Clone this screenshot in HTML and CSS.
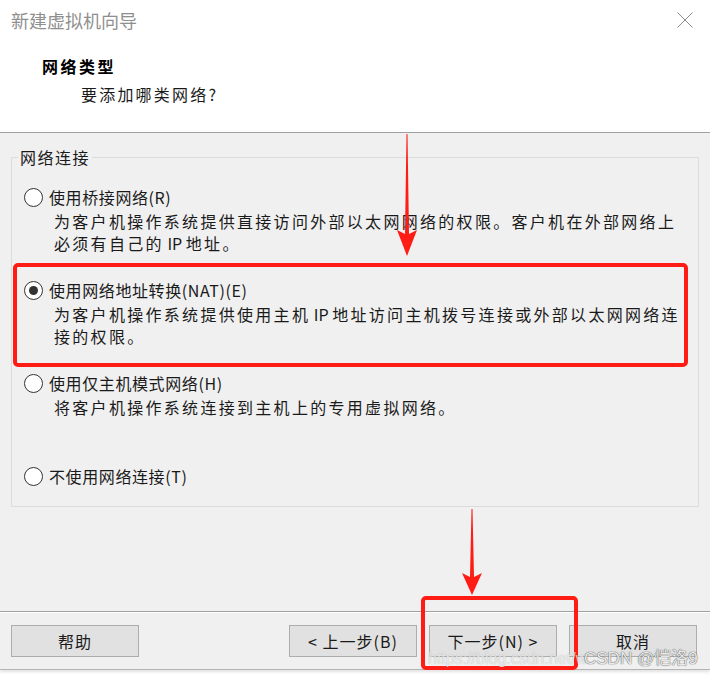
FILE: index.html
```html
<!DOCTYPE html>
<html lang="zh-CN">
<head>
<meta charset="utf-8">
<title>新建虚拟机向导</title>
<link rel="stylesheet" href="styles.css">
</head>
<body>
<div class="dialog">
  <header class="header">
    <div class="titlebar">
      <span class="title">新建虚拟机向导</span>
      <svg class="close" width="16" height="16" viewBox="0 0 16 16"><path d="M0.5 0.5 L15.5 15.5 M15.5 0.5 L0.5 15.5" stroke="#8c8c8c" stroke-width="1" fill="none"/></svg>
    </div>
    <h1 class="heading">网络类型</h1>
    <p class="subheading">要添加哪类网络?</p>
  </header>

  <fieldset class="group">
    <legend class="legend">网络连接</legend>
    <div class="option">
      <span class="radio"></span>
      <div class="label">使用桥接网络(R)</div>
      <div class="desc">为客户机操作系统提供直接访问外部以太网网络的权限。客户机在外部网络上<br>必须有自己的<span class="latin"> IP </span>地址。</div>
    </div>
    <div class="option">
      <span class="radio checked"></span>
      <div class="label">使用网络地址转换(NAT)(E)</div>
      <div class="desc">为客户机操作系统提供使用主机<span class="latin"> IP </span>地址访问主机拨号连接或外部以太网网络连<br>接的权限。</div>
    </div>
    <div class="option">
      <span class="radio"></span>
      <div class="label">使用仅主机模式网络(H)</div>
      <div class="desc">将客户机操作系统连接到主机上的专用虚拟网络。</div>
    </div>
    <div class="option last">
      <span class="radio"></span>
      <div class="label">不使用网络连接(T)</div>
    </div>
  </fieldset>

  <footer class="footer">
    <button class="btn">帮助</button>
    <div class="nav">
      <button class="btn">&lt; 上一步(B)</button>
      <button class="btn">下一步(N) &gt;</button>
      <button class="btn">取消</button>
    </div>
  </footer>
</div>

<div class="mark box1"></div>
<div class="mark box2"></div>
<svg class="mark arrow1" width="24" height="124" viewBox="0 0 24 124"><polygon points="11.5,0 12.5,0 14,100 22,96 12,122 2,96 10,100" fill="#ff1c14"/></svg>
<svg class="mark arrow2" width="24" height="88" viewBox="0 0 24 88"><polygon points="11.5,0 12.5,0 14,68 22,64 12,86 2,64 10,68" fill="#ff1c14"/></svg>
<span class="mark wm-url">https://blog.csdn.net/w</span>
<span class="mark wm-name">CSDN @恺洛9</span>
</body>
</html>
```

FILE: styles.css
```css
* { box-sizing: border-box; }

html, body {
  margin: 0;
  padding: 0;
  background: #ffffff;
}

body {
  width: 710px;
  height: 678px;
  position: relative;
  overflow: hidden;
  font-family: "Noto Sans CJK SC", "Noto Sans", sans-serif;
  color: #1a1a1a;
}

.dialog {
  height: 670px;
  background: #f0f0f0;
  display: flex;
  flex-direction: column;
  border-bottom: 1px solid #b4b4b4;
  box-shadow: 0 2px 3px rgba(0, 0, 0, 0.12);
}

.header {
  height: 133px;
  background: #ffffff;
  border-bottom: 1px solid #a0a0a0;
  padding: 0;
}

.titlebar {
  height: 42px;
  display: flex;
  align-items: center;
  justify-content: space-between;
  padding: 0 17px 2px 11px;
}

.title {
  font-size: 18px;
  color: #8f8f8f;
  letter-spacing: 0;
  line-height: 22px;
}

.close {
  display: block;
}

.heading {
  margin: 13px 0 0 42px;
  font-size: 16px;
  line-height: 22px;
  font-weight: bold;
  letter-spacing: 2.5px;
  color: #000;
}

.subheading {
  margin: 6px 0 0 81px;
  font-size: 16px;
  line-height: 22px;
  letter-spacing: 2.2px;
  color: #1a1a1a;
}

.group {
  margin: 14px 11px 0 11px;
  padding: 19px 12px 19px 12px;
  border: 1px solid #dcdcdc;
  min-width: 0;
}

.legend {
  margin-left: -6px;
  padding: 0 2px;
  font-size: 16px;
  line-height: 20px;
  letter-spacing: 1.5px;
  color: #1a1a1a;
}

.option {
  display: grid;
  grid-template-columns: 25px 1fr;
  margin-bottom: 25px;
}

.option.last {
  margin-bottom: 0;
}

.radio {
  grid-row: 1;
  grid-column: 1;
  width: 19px;
  height: 19px;
  margin-top: 2px;
  border: 1px solid #333333;
  border-radius: 50%;
  background: #ffffff;
  display: flex;
  align-items: center;
  justify-content: center;
}

.radio.checked::after {
  content: "";
  width: 9px;
  height: 9px;
  border-radius: 50%;
  background: #333333;
}

.label {
  grid-row: 1;
  grid-column: 2;
  font-size: 16px;
  line-height: 22px;
  letter-spacing: 0.6px;
  white-space: nowrap;
  color: #1a1a1a;
}

.desc {
  grid-row: 2;
  grid-column: 2;
  margin: 2px 0 0 5px;
  min-height: 44px;
  font-size: 16px;
  line-height: 22px;
  letter-spacing: 2.3px;
  white-space: nowrap;
  color: #1a1a1a;
}

.latin {
  letter-spacing: 0;
}

.footer {
  margin-top: auto;
  border-top: 1px solid #a0a0a0;
  box-shadow: inset 0 1px 0 #ffffff;
  padding: 13px 13px 12px 11px;
  display: flex;
  justify-content: space-between;
}

.nav {
  display: flex;
  gap: 12px;
}

.btn {
  width: 128px;
  height: 32px;
  border: 1px solid #adadad;
  background: #e1e1e1;
  font-family: "Noto Sans CJK SC", "Noto Sans", sans-serif;
  font-size: 16px;
  line-height: 20px;
  letter-spacing: 1px;
  color: #1a1a1a;
  padding: 0;
}

.mark {
  position: absolute;
}

.box1 {
  left: 13px;
  top: 263px;
  width: 675px;
  height: 104px;
  border: 4px solid #ff1c14;
  border-radius: 5px;
}

.box2 {
  left: 421px;
  top: 596px;
  width: 157px;
  height: 74px;
  border: 4px solid #ff1c14;
  border-radius: 5px;
}

.arrow1 {
  left: 395px;
  top: 134px;
}

.arrow2 {
  left: 460px;
  top: 509px;
}

.wm-url,
.wm-name {
  top: 648px;
  font-family: "Liberation Sans", "Noto Sans CJK SC", sans-serif;
  line-height: 22px;
  white-space: nowrap;
}

.wm-url {
  left: 428px;
  font-size: 16px;
  color: rgba(255, 255, 255, 0.7);
  text-shadow: 0 0 1px rgba(100, 100, 100, 0.5);
}

.wm-name {
  left: 584px;
  font-size: 17px;
  color: rgba(255, 255, 255, 0.9);
  text-shadow: 0 0 1px rgba(60, 60, 60, 0.8), 0 0 1px rgba(60, 60, 60, 0.8);
}
```
